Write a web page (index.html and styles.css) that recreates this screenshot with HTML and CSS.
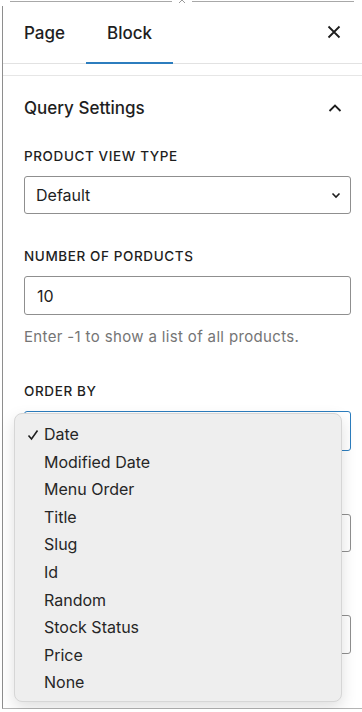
FILE: index.html
```html
<!DOCTYPE html>
<html lang="en">
<head>
  <meta charset="UTF-8" />
  <title>Block settings</title>
  <link rel="stylesheet" href="styles.css">
</head>
<body>
  <!-- top edge of the editor frame -->
  <div class="edge-top">
    <span class="seg seg-a"></span>
    <span class="notch">
      <svg width="8" height="5" viewBox="0 0 8 5"><path d="M1 4l3-3 3 3" stroke="#9a9a9a" stroke-width="1" fill="none"/></svg>
    </span>
    <span class="seg seg-b"></span>
  </div>

  <div class="sidebar">
    <!-- tabs -->
    <div class="tabs">
      <button class="tab">Page</button>
      <button class="tab is-active">Block</button>
      <button class="icon-btn close" aria-label="Close settings">
        <svg width="24" height="24" viewBox="0 0 24 24"><path d="M6.5 6.5l11 11M17.5 6.5l-11 11" stroke="#1e1e1e" stroke-width="1.8" fill="none"/></svg>
      </button>
    </div>

    <!-- query panel -->
    <div class="panel">
      <div class="panel-head">
        <h2>Query Settings</h2>
        <svg class="chev-up" width="24" height="24" viewBox="0 0 24 24"><path d="M6.5 15l5.5-5.5 5.5 5.5" stroke="#1e1e1e" stroke-width="1.8" fill="none"/></svg>
      </div>

      <div class="panel-body">
        <div class="field">
          <div class="field-label">Product view type</div>
          <div class="control select">
            <span>Default</span>
            <svg width="16" height="16" viewBox="0 0 16 16"><path d="M4.5 6.5l3.5 3.5 3.5-3.5" stroke="#1e1e1e" stroke-width="1.6" fill="none"/></svg>
          </div>
        </div>

        <div class="field">
          <div class="field-label">Number of porducts</div>
          <div class="control input">10</div>
          <p class="help">Enter -1 to show a list of all products.</p>
        </div>

        <div class="field">
          <div class="field-label">Order by</div>
          <div class="control select is-focus"></div>
        </div>

        <!-- controls below, covered by the popup -->
        <div class="field no-label">
          <div class="control select"></div>
        </div>

        <div class="field no-label">
          <div class="control input"></div>
        </div>
      </div>
    </div>

    <!-- native select popup -->
    <div class="menu">
      <div class="menu-item is-checked">
        <svg class="check" width="12" height="12" viewBox="0 0 12 12"><path d="M1.5 6.5l3 3.5 6-8.5" stroke="#1e1e1e" stroke-width="1.6" fill="none"/></svg>
        Date
      </div>
      <div class="menu-item">Modified Date</div>
      <div class="menu-item">Menu Order</div>
      <div class="menu-item">Title</div>
      <div class="menu-item">Slug</div>
      <div class="menu-item">Id</div>
      <div class="menu-item">Random</div>
      <div class="menu-item">Stock Status</div>
      <div class="menu-item">Price</div>
      <div class="menu-item">None</div>
    </div>
  </div>
</body>
</html>
```

FILE: styles.css
```css
  body {
    margin: 0;
    background: #fff;
    font-family: Inter, 'Noto Sans', sans-serif;
    color: #1e1e1e;
  }

  /* frame edges */
  .edge-top {
    display: flex;
    align-items: flex-start;
    height: 6px;
    padding-left: 10px;
  }

  .seg {
    display: block;
    height: 1px;
    margin-top: 1px;
    background: #a8a8a8;
  }

  .seg-a {
    width: 162px;
  }

  .seg-b {
    width: 162px;
  }

  .notch {
    display: flex;
    justify-content: center;
    width: 20px;
    height: 5px;
  }

  .notch svg {
    display: block;
    margin-top: -1px;
  }

  .sidebar {
    position: relative;
    margin-left: 2px;
    height: 703px;
    box-sizing: border-box;
    border-left: 1px solid #8e8e8e;
    border-bottom: 1px solid #b4b4b4;
  }

  /* tabs */
  .tabs {
    display: flex;
    align-items: stretch;
    height: 57px;
    border-bottom: 1px solid #e2e2e2;
  }

  .tab {
    margin-bottom: -1px;
    padding: 0 21px 4px;
    border: none;
    background: none;
    font-family: inherit;
    font-size: 17px;
    font-weight: 500;
    color: #1e1e1e;
  }

  .tab.is-active {
    box-shadow: inset 0 -2px 0 #2c7dbe;
  }

  .icon-btn {
    border: none;
    background: none;
    padding: 0;
  }

  .close {
    margin-left: auto;
    margin-right: 16px;
    padding-bottom: 5px;
    display: flex;
    align-items: center;
  }

  /* panel */
  .panel {
    margin-top: 11px;
    border-top: 1px solid #e6e6e6;
  }

  .panel-head {
    display: flex;
    align-items: center;
    justify-content: space-between;
    height: 64px;
    padding: 0 15px 0 21px;
  }

  .panel-head h2 {
    margin: 0;
    font-size: 17px;
    line-height: 20px;
    font-weight: 500;
  }

  .panel-body {
    padding: 8px 11px 0 21px;
  }

  .field {
    margin-bottom: 34px;
  }

  .field.no-label {
    padding-top: 29px;
  }

  .field-label {
    font-size: 13.5px;
    line-height: 16px;
    font-weight: 500;
    letter-spacing: 0.6px;
    text-transform: uppercase;
    margin-bottom: 12px;
  }

  .control {
    display: flex;
    align-items: center;
    justify-content: space-between;
    height: 38px;
    box-sizing: border-box;
    padding: 0 6px 0 11px;
    border: 1px solid #8f8f8f;
    border-radius: 3px;
    font-size: 16px;
  }

  .control.input {
    height: 39px;
    padding-left: 12px;
  }

  .control.is-focus {
    height: 40px;
    border: 1.5px solid #2c7dbe;
  }

  .help {
    margin: 13px 0 0;
    font-size: 15px;
    line-height: 18px;
    letter-spacing: 0.35px;
    color: #757575;
  }

  .field:nth-child(2) {
    margin-bottom: 37px;
  }

  /* popup menu over the order select */
  .menu {
    position: absolute;
    left: 11px;
    top: 407px;
    width: 328px;
    height: 289px;
    box-sizing: border-box;
    padding: 7px 0 6px;
    background: #eeeeee;
    border: 1px solid #d6d6d6;
    border-radius: 8px;
    box-shadow: 0 6px 16px rgba(0,0,0,0.13);
  }

  .menu-item {
    position: relative;
    height: 27.6px;
    line-height: 27.6px;
    padding-left: 29px;
    font-size: 16px;
    color: #262626;
  }

  .check {
    position: absolute;
    left: 12px;
    top: 8px;
  }
```
